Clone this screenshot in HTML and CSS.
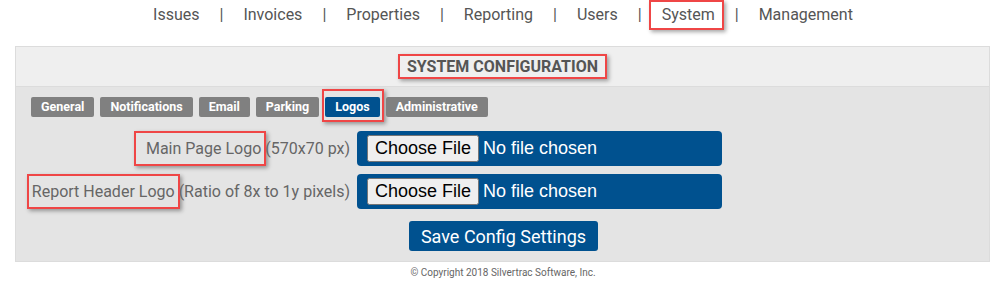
FILE: index.html
```html
<!DOCTYPE html>
<html lang="en">
<head>
    <meta charset="UTF-8">
    <meta name="viewport" content="width=device-width, initial-scale=1.0">
    <title>System Configuration</title>
    <link rel="stylesheet" href="styles.css">
</head>
<body>
    <nav class="topnav">
        <a href="#">Issues</a><span class="sep">|</span>
        <a href="#">Invoices</a><span class="sep">|</span>
        <a href="#">Properties</a><span class="sep">|</span>
        <a href="#">Reporting</a><span class="sep">|</span>
        <a href="#">Users</a><span class="sep">|</span>
        <a href="#" class="mark mark-nav">System</a><span class="sep">|</span>
        <a href="#">Management</a>
    </nav>

    <div class="panel">
        <div class="panel-header">
            <h1 class="mark mark-title">SYSTEM CONFIGURATION</h1>
        </div>
        <div class="panel-body">
            <div class="tabs">
                <a href="#" class="tab">General</a>
                <a href="#" class="tab">Notifications</a>
                <a href="#" class="tab">Email</a>
                <a href="#" class="tab">Parking</a>
                <span class="mark mark-tab"><a href="#" class="tab active">Logos</a></span>
                <a href="#" class="tab">Administrative</a>
            </div>

            <form class="config-form" action="#" method="post">
                <label class="field-label" for="main_logo"><span class="mark mark-label1">Main Page Logo</span>(570x70 px)</label>
                <div class="file-box"><input type="file" id="main_logo" name="main_logo"></div>

                <label class="field-label" for="report_logo"><span class="mark mark-label2">Report Header Logo</span>(Ratio of 8x to 1y pixels)</label>
                <div class="file-box"><input type="file" id="report_logo" name="report_logo"></div>

                <div class="actions">
                    <button type="submit" class="save-btn">Save Config Settings</button>
                </div>
            </form>
        </div>
    </div>

    <footer class="footer">&copy; Copyright 2018 Silvertrac Software, Inc.</footer>
</body>
</html>
```

FILE: styles.css
```css
body {
    font-family: Roboto, "Liberation Sans", Arial, sans-serif;
    margin: 0;
    padding: 0;
    background-color: #fff;
    color: #555;
}
.topnav {
    display: flex;
    justify-content: center;
    align-items: center;
    padding: 5px 0;
    font-size: 16px;
    line-height: 20px;
}
.topnav a {
    color: #555;
    text-decoration: none;
}
.topnav .sep {
    color: #555;
    margin: 0 20px;
}
.mark {
    border: 2px solid #ef4646;
    box-shadow: 2px 2px 4px rgba(0,0,0,0.35);
}
.mark-nav {
    padding: 3px 7px 3px 11px;
    margin: -5px -9px -5px -13px;
}
.panel {
    margin: 16px 16px 0 15px;
    border: 1px solid #dcdcdc;
    background-color: #e4e4e4;
}
.panel-header {
    height: 39px;
    background-color: #efefef;
    border-bottom: 1px solid #dcdcdc;
    display: flex;
    align-items: center;
    justify-content: center;
}
.panel-header h1 {
    margin: 0;
    font-size: 16px;
    font-weight: bold;
    line-height: 21px;
    color: #555;
    padding: 0 7px;
}
.panel-body {
    padding: 10px 0 10px;
}
.tabs {
    display: flex;
    gap: 6px;
    padding-left: 15px;
}
.tab {
    display: block;
    height: 20px;
    line-height: 20px;
    padding: 0 10px;
    background-color: #808080;
    color: #fff;
    font-size: 12.5px;
    font-weight: bold;
    text-decoration: none;
    border-radius: 2px;
}
.tab.active {
    background-color: #00518f;
}
.mark-tab {
    display: block;
    padding: 6px 2px 3px 1px;
    margin: -8px -4px -5px -3px;
}
.config-form {
    display: grid;
    grid-template-columns: 334px 365px;
    column-gap: 7px;
    row-gap: 8px;
    margin-top: 14px;
}
.field-label {
    justify-self: end;
    align-self: center;
    font-size: 16px;
    color: #666;
    white-space: nowrap;
}
.mark-label1 {
    padding: 6px 3px 6px 10px;
    margin: 0 -1px 0 -12px;
}
.mark-label2 {
    padding: 6px 3px 6px 3px;
    margin: 0 -1px 0 -5px;
}
.file-box {
    height: 35px;
    box-sizing: border-box;
    padding: 4px 10px;
    background-color: #00518f;
    border-radius: 4px;
}
.file-box input {
    font-family: "Liberation Sans", Arial, sans-serif;
    font-size: 18px;
    color: #fff;
}
.file-box input::file-selector-button {
    font: inherit;
    color: #000;
    margin-right: 4px;
}
.actions {
    grid-column: 1 / 3;
    display: flex;
    justify-content: center;
    width: 975px;
    margin-top: 4px;
}
.save-btn {
    font-family: Roboto, Arial, sans-serif;
    font-size: 18px;
    color: #fff;
    background-color: #00518f;
    border: none;
    border-radius: 3px;
    height: 30px;
    padding: 0 12px;
}
.footer {
    text-align: center;
    font-size: 10px;
    line-height: 14px;
    color: #666;
    margin-top: 4px;
}
```
